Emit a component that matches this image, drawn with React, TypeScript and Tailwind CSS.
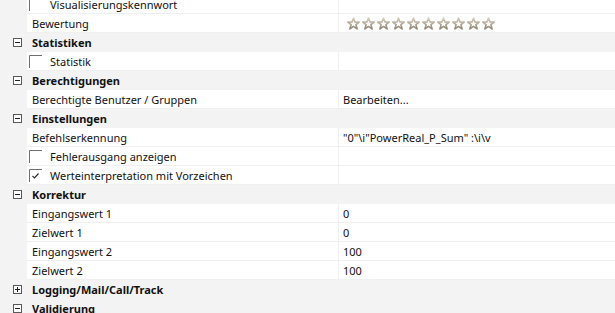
import React from "react";

type Row =
  | { kind: "group"; label: string; open: boolean }
  | { kind: "item"; label: string; value?: React.ReactNode; check?: "off" | "on" };

const rows: Row[] = [
  { kind: "item", label: "Visualisierungskennwort", check: "off" },
  { kind: "item", label: "Bewertung", value: "stars" },
  { kind: "group", label: "Statistiken", open: true },
  { kind: "item", label: "Statistik", check: "off" },
  { kind: "group", label: "Berechtigungen", open: true },
  { kind: "item", label: "Berechtigte Benutzer / Gruppen", value: "Bearbeiten..." },
  { kind: "group", label: "Einstellungen", open: true },
  { kind: "item", label: "Befehlserkennung", value: '"0"\\i"PowerReal_P_Sum" :\\i\\v' },
  { kind: "item", label: "Fehlerausgang anzeigen", check: "off" },
  { kind: "item", label: "Werteinterpretation mit Vorzeichen", check: "on" },
  { kind: "group", label: "Korrektur", open: true },
  { kind: "item", label: "Eingangswert 1", value: "0" },
  { kind: "item", label: "Zielwert 1", value: "0" },
  { kind: "item", label: "Eingangswert 2", value: "100" },
  { kind: "item", label: "Zielwert 2", value: "100" },
  { kind: "group", label: "Logging/Mail/Call/Track", open: false },
  { kind: "group", label: "Validierung", open: true },
];

const Toggle = ({ open }: { open: boolean }) => (
  <svg width="9" height="9" viewBox="0 0 9 9" className="block">
    <rect x="0.5" y="0.5" width="8" height="8" fill="white" stroke="#5a5a5a" />
    <line x1="2" y1="4.5" x2="7" y2="4.5" stroke="#202020" />
    {!open && <line x1="4.5" y1="2" x2="4.5" y2="7" stroke="#202020" />}
  </svg>
);

const Check = ({ on }: { on: boolean }) => (
  <svg width="13" height="13" viewBox="0 0 13 13" className="block">
    <path d="M0.5 13 V0.5 H13" fill="none" stroke="#6e6e6e" />
    {on && <path d="M3.5 7 L5.5 9 L9.5 4.5" fill="none" stroke="#303030" strokeWidth="1.2" />}
  </svg>
);

const Star = () => (
  <svg width="13" height="13" viewBox="0 0 13 13" className="block">
    <defs>
      <linearGradient id="sg" x1="0" y1="0" x2="0" y2="1">
        <stop offset="0" stopColor="#d6cfbd" />
        <stop offset="1" stopColor="#8f8672" />
      </linearGradient>
    </defs>
    <path
      d="M6.5 1 L8 5 L12.2 5.1 L8.9 7.7 L10.1 11.9 L6.5 9.4 L2.9 11.9 L4.1 7.7 L0.8 5.1 L5 5 Z"
      fill="white"
      stroke="url(#sg)"
      strokeWidth="1.6"
      strokeLinejoin="round"
    />
  </svg>
);

const Stars = () => (
  <div className="flex gap-[2px] pl-[4px]">
    {Array.from({ length: 10 }).map((_, i) => (
      <Star key={i} />
    ))}
  </div>
);

export default function App() {
  return (
    <div
      className="w-[615px] h-[313px] overflow-hidden bg-white text-[11px] text-[#111]"
      style={{ fontFamily: '"Segoe UI", "Noto Sans", sans-serif' }}
    >
      <div className="-mt-[5px]">
        {rows.map((row, i) =>
          row.kind === "group" ? (
            <div key={i} className="h-[19px] bg-[#f3f3f3] flex items-center">
              <div className="w-[32px] pl-[13px]">
                <Toggle open={row.open} />
              </div>
              <span className="font-bold leading-none">{row.label}</span>
            </div>
          ) : (
            <div key={i} className="h-[19px] flex">
              <div className="w-[27px] bg-[#f3f3f3]" />
              <div className="flex-1 flex border-b border-[#f0f0f0]">
                <div className="w-[312px] flex items-center border-r border-[#f0f0f0]">
                  {row.check ? (
                    <>
                      <div className="w-[23px] pl-[2px]">
                        <Check on={row.check === "on"} />
                      </div>
                      <span className="leading-none">{row.label}</span>
                    </>
                  ) : (
                    <span className="pl-[5px] leading-none">{row.label}</span>
                  )}
                </div>
                <div className="flex-1 flex items-center pl-[4px]">
                  {row.value === "stars" ? (
                    <Stars />
                  ) : (
                    <span className="leading-none">{row.value}</span>
                  )}
                </div>
              </div>
            </div>
          )
        )}
      </div>
    </div>
  );
}
